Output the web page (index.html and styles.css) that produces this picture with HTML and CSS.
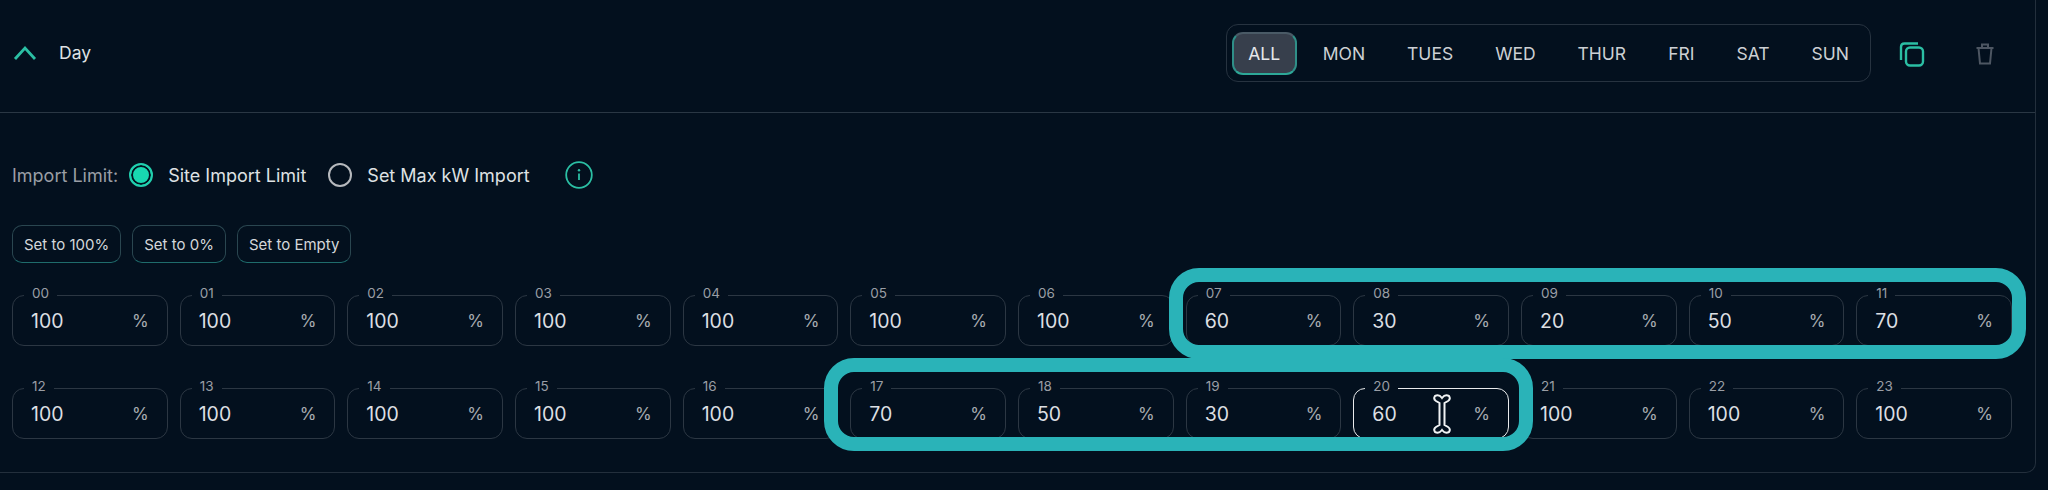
FILE: index.html
```html
<!DOCTYPE html>
<html lang="en">
<head>
<meta charset="utf-8">
<title>Day schedule</title>
<link rel="stylesheet" href="styles.css">
</head>
<body>
<section class="panel">
  <header class="head">
    <svg class="chevron" viewBox="0 0 24 16" width="24" height="16"><path d="M2 14 L12 3 L22 14" fill="none" stroke="#2bbfa4" stroke-width="2.8"/></svg>
    <span class="title">Day</span>
    <div class="days">
      <span class="day active">ALL</span>
      <span class="day">MON</span>
      <span class="day">TUES</span>
      <span class="day">WED</span>
      <span class="day">THUR</span>
      <span class="day">FRI</span>
      <span class="day">SAT</span>
      <span class="day">SUN</span>
    </div>
    <svg class="copy" viewBox="0 0 26 26" width="26" height="26" fill="none" stroke="#2bbfa4" stroke-width="2.4"><path d="M19 2.5 H5.5 Q2 2.5 2 6 V19"/><rect x="7" y="6.5" width="17" height="18" rx="4"/></svg>
    <svg class="trash" viewBox="0 0 20 22" width="20" height="22" fill="none" stroke="#4d5662" stroke-width="2"><path d="M1.5 5 H18.5 M7 5 V1.5 H13 V5 M3.5 5 L5 20.5 H15 L16.5 5"/></svg>
  </header>
  <div class="content">
    <div class="limit">
      <span class="limit-label">Import Limit:</span>
      <span class="radio on"></span>
      <span class="option first">Site Import Limit</span>
      <span class="radio"></span>
      <span class="option">Set Max kW Import</span>
      <svg class="info" viewBox="0 0 28 28" width="28" height="28" fill="none"><circle cx="14" cy="14" r="12.8" stroke="#2bbfa4" stroke-width="1.8"/><circle cx="14" cy="9.2" r="1.2" fill="#2bbfa4"/><path d="M14 12.5 V19" stroke="#2bbfa4" stroke-width="1.8"/></svg>
    </div>
    <div class="actions">
      <span class="action">Set to 100%</span>
      <span class="action">Set to 0%</span>
      <span class="action">Set to Empty</span>
    </div>
    <div class="grid">
      <div class="cell"><span class="hour">00</span><span class="val">100</span><span class="pct">%</span></div>
      <div class="cell"><span class="hour">01</span><span class="val">100</span><span class="pct">%</span></div>
      <div class="cell"><span class="hour">02</span><span class="val">100</span><span class="pct">%</span></div>
      <div class="cell"><span class="hour">03</span><span class="val">100</span><span class="pct">%</span></div>
      <div class="cell"><span class="hour">04</span><span class="val">100</span><span class="pct">%</span></div>
      <div class="cell"><span class="hour">05</span><span class="val">100</span><span class="pct">%</span></div>
      <div class="cell"><span class="hour">06</span><span class="val">100</span><span class="pct">%</span></div>
      <div class="cell"><span class="hour">07</span><span class="val">60</span><span class="pct">%</span></div>
      <div class="cell"><span class="hour">08</span><span class="val">30</span><span class="pct">%</span></div>
      <div class="cell"><span class="hour">09</span><span class="val">20</span><span class="pct">%</span></div>
      <div class="cell"><span class="hour">10</span><span class="val">50</span><span class="pct">%</span></div>
      <div class="cell"><span class="hour">11</span><span class="val">70</span><span class="pct">%</span></div>
      <div class="cell"><span class="hour">12</span><span class="val">100</span><span class="pct">%</span></div>
      <div class="cell"><span class="hour">13</span><span class="val">100</span><span class="pct">%</span></div>
      <div class="cell"><span class="hour">14</span><span class="val">100</span><span class="pct">%</span></div>
      <div class="cell"><span class="hour">15</span><span class="val">100</span><span class="pct">%</span></div>
      <div class="cell"><span class="hour">16</span><span class="val">100</span><span class="pct">%</span></div>
      <div class="cell"><span class="hour">17</span><span class="val">70</span><span class="pct">%</span></div>
      <div class="cell"><span class="hour">18</span><span class="val">50</span><span class="pct">%</span></div>
      <div class="cell"><span class="hour">19</span><span class="val">30</span><span class="pct">%</span></div>
      <div class="cell focus"><span class="hour">20</span><span class="val">60</span><span class="pct">%</span></div>
      <div class="cell"><span class="hour">21</span><span class="val">100</span><span class="pct">%</span></div>
      <div class="cell"><span class="hour">22</span><span class="val">100</span><span class="pct">%</span></div>
      <div class="cell"><span class="hour">23</span><span class="val">100</span><span class="pct">%</span></div>
    </div>
  </div>
</section>
<div class="mark mark-top"></div>
<div class="mark mark-bottom"></div>
<svg class="cursor" viewBox="0 0 20 40" width="20" height="40"><path d="M3 2 Q1 5 4 7 L7.5 9 V31 L4 33 Q1 35 3 38 Q7 40 10 36 Q13 40 17 38 Q19 35 16 33 L12.5 31 V9 L16 7 Q19 5 17 2 Q13 0 10 4 Q7 0 3 2 Z" fill="#03101e" stroke="#f0f2f3" stroke-width="2"/></svg>
</body>
</html>
```
FILE: styles.css
```css
* { box-sizing: border-box; }
html, body { margin: 0; height: 490px; overflow: hidden; }
body {
  position: relative;
  background: #03101e;
  color: #d9dcdf;
  font-family: Inter, "Noto Sans", sans-serif;
}
.panel {
  width: 2036px;
  height: 473px;
  border-right: 1px solid #232f3c;
  border-bottom: 1px solid #232f3c;
  border-bottom-right-radius: 10px;
}
.head {
  height: 113px;
  display: flex;
  align-items: flex-start;
  padding-top: 24px;
  border-bottom: 1px solid #2a3744;
}
.chevron { margin: 21px 0 0 13px; }
.title { margin: 19px 0 0 22px; font-size: 17.5px; line-height: 20px; color: #dfe2e4; }
.days {
  margin-left: auto;
  height: 58px;
  display: flex;
  align-items: center;
  padding-left: 5px;
  border: 1px solid #273340;
  border-radius: 12px;
  font-size: 17.5px;
  color: #cdd0d4;
}
.day { padding: 0 21px; }
.active {
  height: 43px;
  width: 65px;
  margin-right: 5px;
  padding: 0;
  display: flex;
  align-items: center;
  justify-content: center;
  color: #e6e8ea;
  background: #373f4c;
  border: 2px solid #4a5a66;
  border-bottom-color: #2da898;
  border-right-color: #2f8f88;
  border-left-color: #2f8f88;
  border-radius: 11px;
}
.copy { margin: 17px 0 0 28px; }
.trash { margin: 19px 40px 0 50px; }
.content { padding: 47px 23px 0 12px; }
.limit { display: flex; align-items: center; height: 30px; font-size: 18px; }
.limit-label { color: #9a9ea5; margin-right: 11px; }
.radio {
  width: 24px;
  height: 24px;
  flex: none;
  border: 2.5px solid #b6b9bd;
  border-radius: 50%;
}
.on {
  border-color: #21cfae;
  background: #18d8b0;
  box-shadow: inset 0 0 0 2px #03101e;
}
.option { margin-left: 15px; color: #dfe2e4; }
.first { margin-right: 22px; }
.info { margin-left: 35px; }
.actions { display: flex; gap: 11px; margin-top: 35px; }
.action {
  height: 38px;
  padding: 0 11px;
  display: flex;
  align-items: center;
  font-size: 15px;
  color: #d4d7da;
  border: 1px solid #2a4650;
  border-bottom-color: #1f6c6c;
  border-radius: 10px;
}
.grid {
  display: grid;
  grid-template-columns: repeat(12, 1fr);
  column-gap: 12px;
  row-gap: 42px;
  margin-top: 32px;
}
.cell {
  position: relative;
  height: 51px;
  padding: 0 18px;
  display: flex;
  align-items: center;
  justify-content: space-between;
  border: 1px solid #2c3743;
  border-radius: 12px;
}
.hour {
  position: absolute;
  left: 11px;
  top: -11px;
  padding: 0 8px;
  background: #03101e;
  font-size: 13.5px;
  line-height: 16px;
  color: #9a9ea5;
}
.val { font-size: 19.5px; color: #dcdfe2; }
.pct { font-size: 17px; color: #a8acb1; }
.focus { border-color: #e9ebec; }
.mark {
  position: absolute;
  border: 14px solid #2ab3b8;
  border-radius: 30px;
}
.mark-top { left: 1169px; top: 268px; width: 857px; height: 91px; }
.mark-bottom { left: 824px; top: 358px; width: 709px; height: 93px; }
.cursor { position: absolute; left: 1432px; top: 394px; }
```
